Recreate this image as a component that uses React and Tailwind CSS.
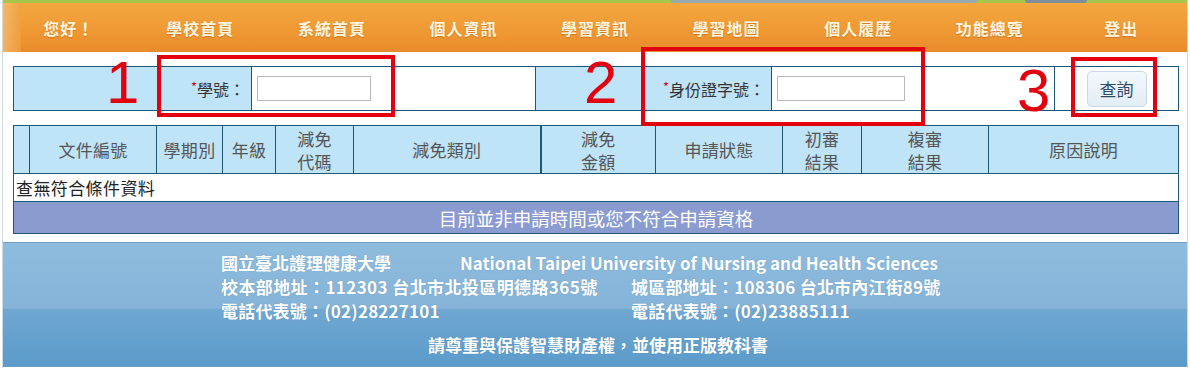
export default function App() {
  const nav = ["您好！", "學校首頁", "系統首頁", "個人資訊", "學習資訊", "學習地圖", "個人履歷", "功能總覽", "登出"];
  const th = "border border-[#1d5676] bg-[#bfe3f7] font-normal text-[17px] tracking-[0.3px] leading-[23px] text-[#555] text-center align-middle p-0";
  return (
    <div className="relative w-[1190px] h-[368px] overflow-hidden bg-white font-['Noto_Sans_CJK_TC','Noto_Sans',sans-serif]">
      <div className="mx-[2px] h-[368px] border-x border-[#cfd9df] flex flex-col">
        {/* top strip */}
        <div className="relative h-[3px] bg-[#a8c64c]">
          <div className="absolute left-[668px] top-0 h-[3px] w-[306px] rounded-b-full bg-[#9aa8b0]"></div>
          <div className="absolute left-[1022px] top-0 h-[3px] w-[62px] rounded-b-full bg-[#7f8e9a]"></div>
        </div>
        {/* nav */}
        <div className="relative h-[49px] flex bg-[linear-gradient(to_bottom,#f4a73f,#ef9833_60%,#e88a2c)]">
          <div className="absolute left-0 top-0 h-[49px] w-[18px] bg-[linear-gradient(to_right,#f7c07a,#f0a040)] opacity-70"></div>
          {nav.map((n) => (
            <div key={n} className="relative flex-1 flex items-center justify-center text-[16px] font-bold tracking-[1px] text-[#fff5df] [text-shadow:0_1px_1px_rgba(150,70,0,0.35)]">
              {n}
            </div>
          ))}
        </div>
        {/* content */}
        <div className="px-[10px] pt-[14px]">
          <table className="w-[1165px] table-fixed border-collapse">
            <colgroup>
              <col className="w-[238px]" />
              <col className="w-[284px]" />
              <col className="w-[236px]" />
              <col className="w-[283px]" />
              <col className="w-[124px]" />
            </colgroup>
            <tbody>
              <tr className="h-[44px]">
                <td className="border border-[#1d5676] bg-[#bfe3f7] text-right pr-[6px] text-[16px] text-[#333]">
                  <span className="text-[#d0021b] text-[13px] align-top">*</span>學號：
                </td>
                <td className="border border-[#1d5676] bg-white pl-[5px]">
                  <div className="w-[114px] h-[25px] border border-[#b9b9b9] bg-white"></div>
                </td>
                <td className="border border-[#1d5676] bg-[#bfe3f7] text-right pr-[6px] text-[16px] text-[#333]">
                  <span className="text-[#d0021b] text-[13px] align-top">*</span>身份證字號：
                </td>
                <td className="border border-[#1d5676] bg-white pl-[5px]">
                  <div className="w-[128px] h-[25px] border border-[#b9b9b9] bg-white"></div>
                </td>
                <td className="border border-[#1d5676] bg-white text-center">
                  <button className="w-[60px] h-[36px] rounded-[5px] border border-[#c9d8e6] bg-[linear-gradient(to_bottom,#f3f8fc,#e3edf6)] text-[17px] text-[#2d4b68]">
                    查詢
                  </button>
                </td>
              </tr>
            </tbody>
          </table>

          <table className="mt-[14px] w-[1165px] table-fixed border-collapse">
            <colgroup>
              <col className="w-[16px]" />
              <col className="w-[127px]" />
              <col className="w-[66px]" />
              <col className="w-[53px]" />
              <col className="w-[78px]" />
              <col className="w-[187px]" />
              <col className="w-[115px]" />
              <col className="w-[127px]" />
              <col className="w-[79px]" />
              <col className="w-[127px]" />
              <col className="w-[190px]" />
            </colgroup>
            <thead>
              <tr className="h-[48px]">
                <th className={th}></th>
                <th className={th}>文件編號</th>
                <th className={th}>學期別</th>
                <th className={th}>年級</th>
                <th className={th}>減免<br />代碼</th>
                <th className={th + " border-r-2"}>減免類別</th>
                <th className={th}>減免<br />金額</th>
                <th className={th}>申請狀態</th>
                <th className={th}>初審<br />結果</th>
                <th className={th}>複審<br />結果</th>
                <th className={th}>原因說明</th>
              </tr>
            </thead>
            <tbody>
              <tr className="h-[28px]">
                <td colSpan={11} className="border border-[#1d5676] bg-white pl-[2px] text-[17px] tracking-[0.4px] text-[#222] leading-[26px]">
                  查無符合條件資料
                </td>
              </tr>
              <tr className="h-[32px]">
                <td colSpan={11} className="border border-[#1d5676] bg-[#8a9bcf] text-center text-[18.5px] text-white leading-[30px]">
                  目前並非申請時間或您不符合申請資格
                </td>
              </tr>
            </tbody>
          </table>
        </div>
        {/* footer */}
        <div className="mt-[8px] h-[125px] border-t border-b border-[#6d9fc4] bg-[linear-gradient(to_bottom,#8ebcdd_0%,#86b4d9_53%,#70a7d1_54%,#5b9bcb_100%)] text-white font-bold text-[17px] leading-[24px] pl-[218px] pt-[8px] [text-shadow:0_0_1px_rgba(40,80,120,0.3)]">
          <div className="flex">
            <div className="w-[239px]">國立臺北護理健康大學</div>
            <div>National Taipei University of Nursing and Health Sciences</div>
          </div>
          <div className="flex">
            <div className="w-[410px] tracking-[0.4px]">校本部地址：112303 台北市北投區明德路365號</div>
            <div className="tracking-[0.2px]">城區部地址：108306 台北市內江街89號</div>
          </div>
          <div className="flex">
            <div className="w-[410px] tracking-[0.2px]">電話代表號：(02)28227101</div>
            <div className="tracking-[0.2px]">電話代表號：(02)23885111</div>
          </div>
          <div className="mt-[10px] w-[754px] text-center">請尊重與保護智慧財產權，並使用正版教科書</div>
        </div>
      </div>

      {/* annotations */}
      <div className="absolute left-[157px] top-[55px] w-[238px] h-[62px] border-[4px] border-[#e3000f]"></div>
      <div className="absolute left-[641px] top-[47px] w-[284px] h-[79px] border-[4px] border-[#e3000f]"></div>
      <div className="absolute left-[1071px] top-[57px] w-[86px] h-[60px] border-[4px] border-[#e3000f]"></div>
      <div className="absolute left-[106px] top-[50px] text-[60px] leading-[66px] text-[#e3000f] font-['Liberation_Sans',sans-serif]">1</div>
      <div className="absolute left-[584px] top-[50px] text-[60px] leading-[66px] text-[#e3000f] font-['Liberation_Sans',sans-serif]">2</div>
      <div className="absolute left-[1017px] top-[58px] text-[60px] leading-[66px] text-[#e3000f] font-['Liberation_Sans',sans-serif]">3</div>
    </div>
  );
}
